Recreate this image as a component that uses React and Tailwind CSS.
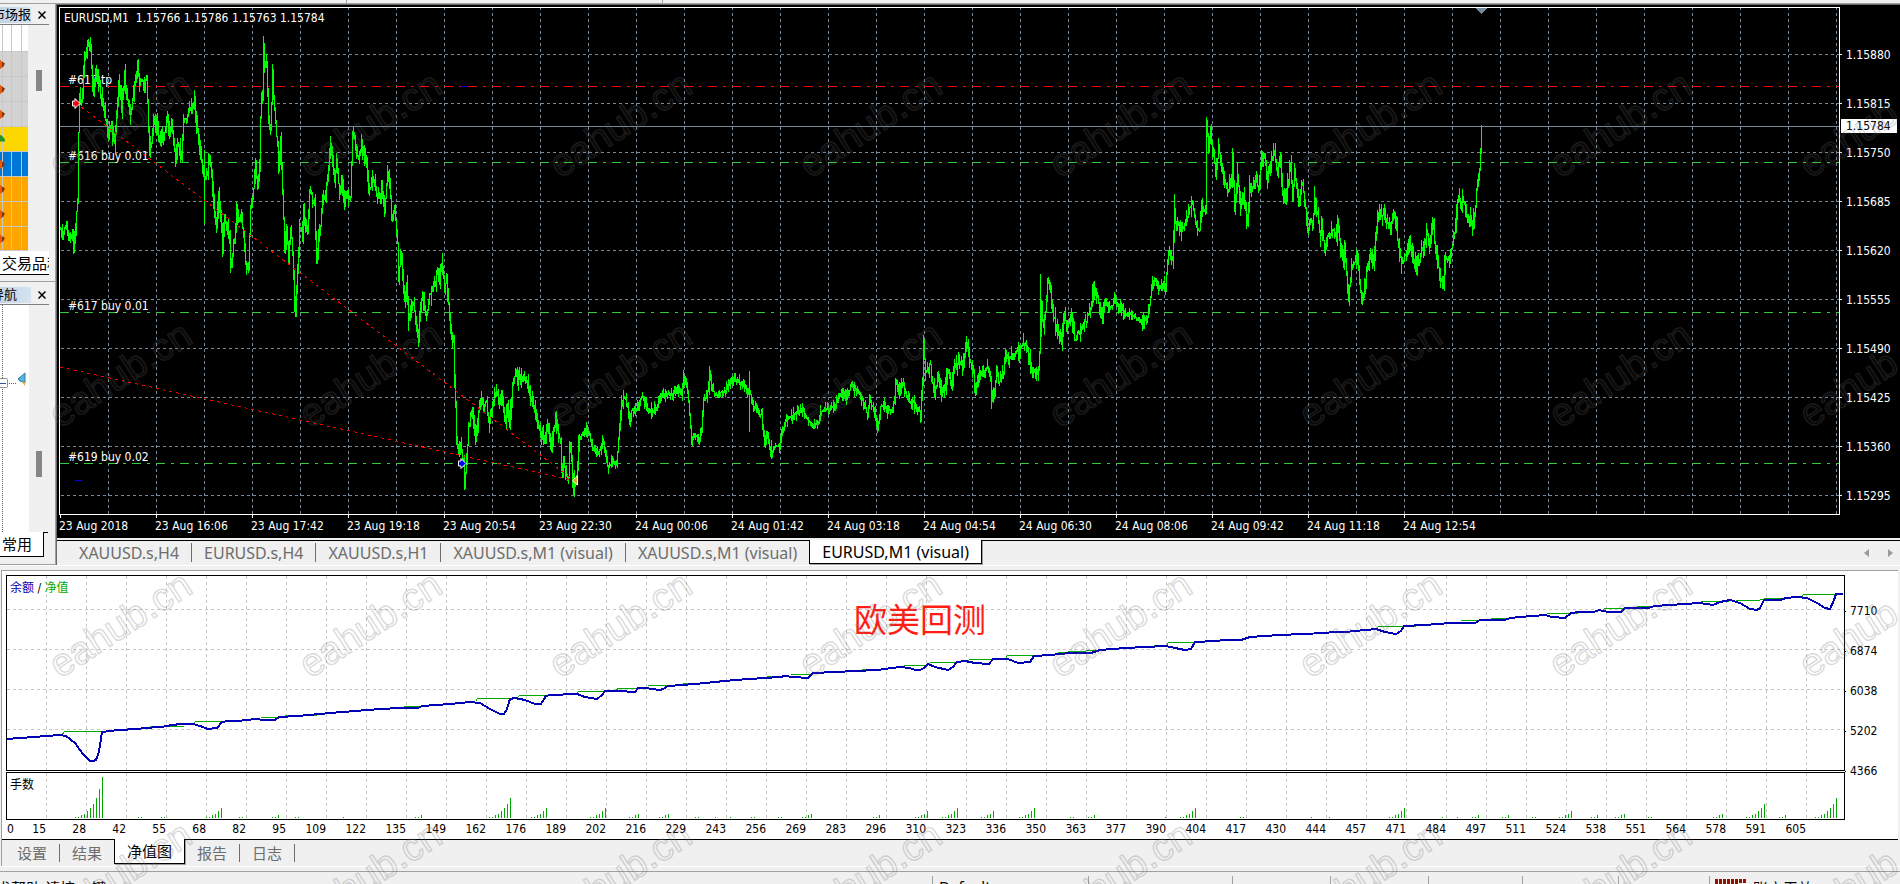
import { useState } from "react";
import { clsx } from "clsx";

const chartTabs = [
  "XAUUSD.s,H4",
  "EURUSD.s,H4",
  "XAUUSD.s,H1",
  "XAUUSD.s,M1 (visual)",
  "XAUUSD.s,M1 (visual)",
  "EURUSD,M1 (visual)",
];

const testerTabs = ["设置", "结果", "净值图", "报告", "日志"];

const prices = [
  "1.15880", "1.15815", "1.15750", "1.15685", "1.15620",
  "1.15555", "1.15490", "1.15425", "1.15360", "1.15295",
];

const times = [
  "23 Aug 2018", "23 Aug 16:06", "23 Aug 17:42", "23 Aug 19:18", "23 Aug 20:54",
  "23 Aug 22:30", "24 Aug 00:06", "24 Aug 01:42", "24 Aug 03:18", "24 Aug 04:54",
  "24 Aug 06:30", "24 Aug 08:06", "24 Aug 09:42", "24 Aug 11:18", "24 Aug 12:54",
];

const trades = [
  15, 28, 42, 55, 68, 82, 95, 109, 122, 135, 149, 162, 176, 189, 202, 216, 229,
  243, 256, 269, 283, 296, 310, 323, 336, 350, 363, 377, 390, 404, 417, 430,
  444, 457, 471, 484, 497, 511, 524, 538, 551, 564, 578, 591, 605,
];

const balances = [7710, 6874, 6038, 5202, 4366];

const orders = [
  { y: 86, label: "#617 tp", stroke: "#ff0000" },
  { y: 162, label: "#616 buy 0.01", stroke: "#32cd32" },
  { y: 312, label: "#617 buy 0.01", stroke: "#32cd32" },
  { y: 463, label: "#619 buy 0.02", stroke: "#32cd32" },
];

const quotes = [
  { bg: "bg-white", h: "h-[27px]", arrow: null },
  { bg: "bg-[#d3d3d3]", h: "h-[25px]", arrow: "down" },
  { bg: "bg-[#d3d3d3]", h: "h-[25px]", arrow: "down" },
  { bg: "bg-[#d3d3d3]", h: "h-[25px]", arrow: "down" },
  { bg: "bg-[#ffd700]", h: "h-[25px]", arrow: "up" },
  { bg: "bg-[#0078d7]", h: "h-[25px]", arrow: "down" },
  { bg: "bg-[#ffa500]", h: "h-[25px]", arrow: "down" },
  { bg: "bg-[#ffa500]", h: "h-[25px]", arrow: "down" },
  { bg: "bg-[#ffa500]", h: "h-[24px]", arrow: "down" },
];

// price path, x y pairs
const track = `59 225 62 232 65 222 68 238 71 234 73 250 75 225 76 212 77 205 78 130 79 92 80 106
82 98 83 70 85 55 87 45 90 46 91 70 93 90 95 76 98 82 100 92 103 108 106 125 108 136 110 126 112 136
114 142 117 95 118 84 120 92 121 108 123 84 124 72 126 95 130 114 132 100 135 80 137 67 139 82 142 80
144 90 146 74 147 100 149 152 151 140 153 122 155 128 156 118 158 142 160 132 162 140 165 128 167 115
169 132 171 120 173 140 175 164 177 140 179 150 181 158 183 120 186 120 188 112 191 106 194 98 196 122
199 145 202 170 205 178 207 172 209 156 211 175 213 200 216 230 218 190 220 215 222 246 224 216 227 225
229 235 230 266 232 252 234 240 236 208 238 220 241 216 243 235 245 262 248 264 250 208 252 195 255 168
257 185 259 160 260 120 262 90 263 42 264 62 266 64 268 120 270 132 272 70 273 98 275 125 277 145
278 172 280 142 282 190 284 246 286 228 288 260 290 228 292 250 293 278 294 300 295 308 296 285 299 228
302 235 303 206 305 228 307 232 309 190 312 198 314 202 316 258 318 240 320 225 322 195 324 200 327 178
330 145 332 163 334 182 336 160 339 192 341 178 344 198 347 192 350 198 352 130 355 145 358 160 361 145
363 148 366 165 369 188 372 178 375 190 378 198 381 190 384 210 387 173 389 178 391 218 394 210 397 240
398 276 400 258 401 254 403 288 404 300 406 284 408 322 411 305 413 300 415 322 417 338 418 334 419 314
422 290 424 310 426 314 428 300 431 287 434 284 436 275 438 267 439 283 441 264 443 273 444 288 446 282
447 287 449 320 451 338 453 335 454 380 456 440 459 455 460 448 463 466 464 485 466 462 468 428 470 415
472 410 475 440 477 420 479 402 482 400 484 404 486 402 488 422 490 415 492 405 495 397 497 392 499 400
501 394 503 412 505 416 507 408 509 420 511 400 512 385 515 371 517 378 521 377 525 380 528 386 531 402
535 412 539 427 541 438 544 437 547 424 551 452 553 430 555 416 558 430 560 445 561 475 563 462 566 478
568 475 569 445 571 458 573 494 574 485 576 480 578 445 581 434 584 430 588 430 590 440 593 450 596 453
600 449 602 438 605 455 607 468 611 462 616 463 618 440 621 402 624 396 627 405 629 425 631 410 635 408
638 405 641 397 645 400 648 412 652 410 656 408 661 395 670 393 675 391 678 387 681 395 683 376 686 383
688 400 691 442 694 435 698 437 701 432 703 400 707 392 709 372 711 388 715 397 720 393 725 392 728 382
730 379 735 380 740 383 745 387 749 392 752 403 757 410 761 415 764 440 767 435 771 455 774 445 779 447
782 430 787 417 795 413 803 411 808 420 813 427 818 423 820 410 828 409 835 402 842 393 846 397 850 385
855 390 862 400 867 415 869 402 873 408 877 428 880 408 883 402 886 411 891 409 894 400 895 380 898 393
901 382 903 385 906 396 910 402 914 404 918 408 920 411 922 385 923 342 925 372 928 370 930 362 931 380
934 393 938 376 941 394 945 382 947 367 951 388 954 364 958 362 962 364 966 340 969 360 973 375 975 388
980 378 987 368 990 378 992 402 994 395 996 366 998 383 1002 375 1005 357 1008 360 1012 352 1018 350
1022 343 1026 347 1029 358 1032 370 1037 372 1039 355 1041 312 1043 325 1045 312 1047 282 1048 279
1051 302 1054 320 1057 332 1061 342 1064 314 1067 325 1071 315 1074 340 1080 330 1086 320 1090 308
1092 292 1094 288 1097 298 1102 315 1105 297 1109 308 1114 299 1120 307 1125 315 1130 313 1136 317
1140 322 1146 319 1149 305 1151 288 1155 281 1160 289 1162 283 1165 290 1167 260 1169 248 1172 257
1174 220 1177 223 1180 232 1183 226 1187 218 1190 205 1192 200 1195 226 1199 228 1201 210 1205 211
1206 122 1208 148 1210 132 1213 155 1215 172 1218 150 1221 163 1224 178 1227 190 1230 184 1232 160
1234 205 1237 175 1240 208 1243 195 1247 222 1249 182 1252 190 1255 177 1258 188 1261 158 1264 152
1267 180 1271 158 1274 152 1277 174 1280 157 1282 192 1285 202 1287 182 1290 168 1292 198 1294 168
1298 205 1302 182 1305 208 1307 235 1309 218 1312 225 1314 198 1317 215 1320 236 1321 220 1324 248
1328 236 1332 228 1336 237 1337 220 1340 245 1343 262 1344 246 1347 285 1348 298 1351 268 1354 260
1357 253 1359 285 1361 297 1363 297 1366 268 1370 257 1373 260 1375 236 1379 208 1380 215 1383 212
1386 222 1390 231 1393 209 1396 230 1398 245 1401 265 1404 258 1407 252 1409 238 1412 252 1415 266
1419 260 1423 244 1426 232 1429 245 1432 222 1434 240 1437 260 1439 278 1443 278 1445 256 1449 258
1452 242 1455 226 1457 197 1460 200 1463 200 1466 218 1469 215 1472 227 1475 203 1477 178 1479 165
1480 150 1482 127`
  .split(/\s+/)
  .map(Number);

// single long wicks: x, high, low
const wicks = [
  [204, 150, 224], [263, 36, 80], [272, 64, 100], [294, 270, 312], [574, 470, 497],
  [709, 373, 395], [709, 366, 390], [749, 371, 432], [771, 440, 459], [923, 335, 380],
  [966, 336, 352], [991, 390, 409], [1040, 274, 340], [1094, 281, 300], [1174, 194, 238],
  [1206, 117, 174], [1232, 148, 188], [1273, 143, 160], [1289, 160, 186], [1432, 217, 232],
  [1246, 212, 229], [1481, 125, 140], [464, 470, 490],
];

// stable pseudo random value in 0..1
const rand = (n) => Math.abs(Math.sin(n * 12.9898) * 43758.5453) % 1;

const buildBars = () => {
  let d = "";
  let i = 0;
  const at = (x) => {
    while (i < track.length - 4 && track[i + 2] < x) i += 2;
    const [x0, y0, x1, y1] = track.slice(i, i + 4);
    return y0 + ((y1 - y0) * (x - x0)) / (x1 - x0);
  };
  let prev = at(60);
  for (let x = 60; x <= 1481; x++) {
    const calm = (x > 580 && x < 920) || (x > 1100 && x < 1150);
    const size = calm ? 7 : 11;
    const y = at(x) + (rand(x + 5000) - 0.5) * (calm ? 4 : 6);
    const top = rand(x) ** 2 * size;
    const low = rand(x + 3000) ** 2 * size;
    const a = Math.round(Math.min(prev, y) - top);
    const b = Math.round(Math.max(prev, y) + low) + 1;
    d += `M${x + 0.5} ${a}V${b}`;
    prev = y;
  }
  wicks.forEach(([x, a, b]) => {
    d += `M${x + 0.5} ${a}V${b}`;
  });
  return d;
};

const bars = buildBars();

const equity = `7,739 60,735 66,736 75,743 83,754 90,761 93,761 96,760 99,752 100,745 102,732 118,730
139,729 143,728 162,727 166,726 180,724 193,724 200,726 208,729 217,728 222,722 228,721 240,721
244,720 258,719 262,720 275,720 279,717 298,716 330,713 380,709 400,708 418,708 422,706 450,704
470,702 480,703 490,709 500,714 504,714 507,709 510,699 515,698 525,700 535,704 541,704 546,696
550,695 577,694 585,697 597,699 602,695 605,691 619,691 635,692 638,688 645,688 660,690 663,689
668,686 695,684 725,681 735,680 765,678 780,677 785,676 793,677 808,678 813,673 835,672 877,670
900,667 910,668 915,670 920,670 924,668 928,664 935,667 948,670 953,667 957,662 965,661 975,663
989,664 993,659 1008,659 1018,663 1030,662 1034,656 1050,655 1070,653 1091,653 1100,650 1125,648
1145,647 1166,646 1175,648 1185,650 1191,649 1195,642 1215,641 1225,640 1241,640 1250,637
1280,635 1325,633 1333,632 1345,632 1376,629 1385,632 1396,634 1401,631 1404,626 1425,625
1450,623 1475,623 1480,620 1505,620 1510,618 1520,617 1545,615 1552,617 1565,618 1571,613
1580,612 1594,612 1599,610 1608,612 1621,612 1625,608 1648,608 1655,606 1700,603 1713,605
1720,602 1730,600 1740,603 1750,609 1757,610 1760,608 1764,600 1780,600 1786,598 1797,597
1807,598 1817,603 1825,608 1830,609 1834,600 1836,594 1843,594`;

const balancePath =
  "M61 735 64 731H101M126 728H142M149 726H183M192 724 195 721H221M227 720H250M260 717H277M284 715H316M403 706H420M475 701 477 698H508M516 698 519 695H546M576 693 578 691H606M616 690 617 688H638M647 685H667M682 683H700M718 680H730M766 676H780M790 674H812M861 669H877M903 665H926M928 664 930 662H957M967 662 969 659H993M1005 658 1007 655H1033M1058 652 1095 650M1153 645H1166L1168 642H1195M1229 639H1242M1317 632H1326M1376 628 1378 626H1415M1460 620H1478M1490 618H1508M1546 613H1577M1583 611H1594M1602 610 1604 608H1622M1636 606H1650M1700 601H1728M1735 600H1757L1766 598H1790M1801 597 1803 594H1836";

// lot size doubles up inside a series: [first x, trades in series]
const lotHeights = [1, 1, 3, 4, 7, 10, 14, 20, 29, 41];
const lotSeries = [
  [75, 10], [138, 2], [161, 2], [206, 6], [239, 2], [272, 3], [295, 2], [343, 1],
  [415, 3], [489, 8], [531, 6], [590, 6], [629, 4], [659, 4], [695, 2], [715, 1],
  [730, 1], [751, 2], [778, 2], [802, 4], [873, 3], [915, 5], [942, 6], [981, 5],
  [1019, 6], [1070, 2], [1088, 3], [1165, 1], [1180, 6], [1240, 2], [1311, 1],
  [1329, 1], [1389, 6], [1442, 1], [1457, 1], [1472, 3], [1502, 3], [1532, 2],
  [1559, 5], [1591, 3], [1615, 4], [1648, 2], [1713, 4], [1746, 7], [1779, 3],
  [1815, 8],
];

const lots = lotSeries
  .map(([x, n]) =>
    lotHeights
      .slice(0, n)
      .map((h, i) => `M${x + i * 3 + 0.5} 818v${-h}`)
      .join(""),
  )
  .join("");

const range = (n) => Array.from({ length: n }, (_, i) => i);

const CloseButton = ({ label }) => (
  <button aria-label={label} className="mr-[5px] flex h-4 w-4 items-center justify-center">
    <svg width="8" height="8" viewBox="0 0 8 8" stroke="#000" strokeWidth="1.5">
      <path d="M0.5 0.5 7.5 7.5M7.5 0.5 0.5 7.5" />
    </svg>
  </button>
);

const PanelTitle = ({ text, className }) => (
  <div className="flex h-[18px] items-center justify-between">
    <h2
      className={clsx(
        "flex h-4 w-[31px] items-center justify-end overflow-hidden bg-linear-to-r from-[#c3d3e4] to-[#d6e3f1] text-[13px] whitespace-nowrap",
        className,
      )}
    >
      {text}
    </h2>
    <CloseButton label={`关闭${text}`} />
  </div>
);

const MarketWatch = () => (
  <section className="flex h-[276px] flex-col border-b border-[#a0a0a0]">
    <PanelTitle text="市场报" />
    <div className="mr-1.5 flex border-t border-[#808080]">
      <div className="w-7 shrink-0">
        {quotes.map((q, i) => (
          <div key={i} className={clsx("flex items-center border-b border-[#c8c8c8]", q.bg, q.h)}>
            <svg width="28" height="100%" viewBox="0 0 28 25" preserveAspectRatio="none">
              <path d="M2.5 0V25M11.5 0V25M21.5 0V25" stroke="#c8c8c8" />
              {q.arrow === "down" && (
                <>
                  <path d="M0 8 2 10V16L0 18Z" fill="#e8590c" />
                  <path d="M2 10 5 12 3 16H2Z" fill="#8a3208" />
                </>
              )}
              {q.arrow === "up" && <path d="M0 8 2 9 5 13V15H0Z" fill="#22962b" />}
            </svg>
          </div>
        ))}
      </div>
      <div className="flex-1 pt-[45px]">
        <div className="ml-2 h-[21px] w-1.5 bg-[#858585]" />
      </div>
    </div>
    <button className="h-[24px] w-[49px] shrink-0 overflow-hidden border-b border-black bg-white pl-0.5 text-left text-[15px] leading-6 whitespace-nowrap">
      交易品种
    </button>
  </section>
);

const Navigator = () => (
  <section className="mt-1 flex flex-1 flex-col border-b border-[#a0a0a0]">
    <PanelTitle text="导航" className="pr-3.5" />
    <div className="mr-1.5 flex h-[228px] border-t border-[#808080]">
      <div className="w-[29px] bg-white">
        <svg width="29" height="227" viewBox="0 0 29 227">
          <path d="M2.5 0V74M2.5 84V227" stroke="#606060" strokeDasharray="1 1" />
          <path d="M9 78.500H17" stroke="#606060" strokeDasharray="1 1" />
          <rect x="-2.5" y="73.5" width="10" height="9" rx="1" fill="#fff" stroke="#909090" />
          <path d="M0 78.500H6" stroke="#3b4fa0" />
          <path d="M18 74 25 68V78L20 76Z" fill="#58b4dc" stroke="#2c7fa8" />
          <path d="M22 77H25V81Z" fill="#e0a820" />
        </svg>
      </div>
      <div className="flex-1 pt-[146px]">
        <div className="ml-[7px] h-[26px] w-1.5 bg-[#858585]" />
      </div>
    </div>
    <div className="flex">
      <button className="h-[25px] w-11 border-r border-b border-black bg-white pl-0.5 text-left text-[15px] leading-6">
        常用
      </button>
      <div className="mr-[7px] flex-1 border-t border-black" />
    </div>
  </section>
);

const PriceChart = () => (
  <div className="flex h-[533px] bg-black pt-0.5 pl-0.5 font-['DejaVu_Sans_Condensed','Noto_Sans',sans-serif] text-xs text-white">
    <div className="min-w-0 flex-1">
      <div className="h-[508px] overflow-hidden border border-white">
        <svg width="1779" height="506" shapeRendering="crispEdges">
          <g transform="translate(-60 -8)" fill="none">
            <g stroke="#778899" strokeDasharray="3 3">
              {range(37).map((i) => (
                <path key={i} d={`M${108.5 + i * 48} 7V514`} />
              ))}
              {range(10).map((i) => (
                <path key={i} d={`M61 ${54.5 + i * 49}H1839`} />
              ))}
            </g>
            <path d="M60 126.5H1839" stroke="#778899" />
            {orders.map((o) => (
              <path
                key={o.y}
                d={`M60 ${o.y + 0.5}H1839`}
                stroke={o.stroke}
                strokeDasharray="9 6 3 6"
              />
            ))}
            <g className="text-xs" fill="#fff">
              <text x="64" y="22">
                {"EURUSD,M1\u00a0\u00a01.15766 1.15786 1.15763 1.15784"}
              </text>
              {orders.map((o) => (
                <text key={o.y} x="68" y={o.y - 2}>
                  {o.label}
                </text>
              ))}
            </g>
            <path d={bars} stroke="#00ff00" />
            <g stroke="#ff0000" strokeDasharray="3 4">
              <path d="M76 103 572 479" />
              <path d="M60 367 572 480" />
            </g>
            <path d="M75 480.5H82M461 86.5H468" stroke="#0000ff" />
            <path d="M1476 8H1487L1481.5 14Z" fill="#778899" />
            <g stroke="#fff" shapeRendering="auto">
              <path d="M72.500 101H75V98.500L80 103.500 75 108.500V106H72.500Z" fill="#ff0000" />
              <path d="M458.500 461H461V458.500L466 463.500 461 468.500V466H458.500Z" fill="#0000ff" />
              <path d="M572.500 480.500 577.500 476V485Z" fill="#daa520" />
            </g>
          </g>
        </svg>
      </div>
      <div className="flex">
        {times.map((t) => (
          <div key={t} className="w-24 shrink-0 whitespace-nowrap">
            <div className="ml-px h-[3px] w-px bg-white" />
            <div className="leading-[17px]">{t}</div>
          </div>
        ))}
      </div>
    </div>
    <div className="relative w-[60px] pt-[23px]">
      {prices.map((p) => (
        <div key={p} className="flex h-[49px] items-center">
          <span className="mr-1 h-px w-0.5 bg-white" />
          {p}
        </div>
      ))}
      <div className="absolute top-28 left-px h-3.5 w-14 bg-white pl-[5px] leading-[14px] text-black">
        1.15784
      </div>
    </div>
  </div>
);

const ChartTabs = () => {
  const [active, setActive] = useState(5);

  return (
    <div className="mt-0.5 flex h-6 items-stretch border-t border-black pl-2.5 text-[#6d6d6d]">
      {chartTabs.map((t, i) => (
        <button
          key={i}
          onClick={() => setActive(i)}
          className={clsx(
            "flex items-center px-3 text-base whitespace-nowrap",
            active === i
              ? "-mt-px border border-t-0 border-black bg-white pt-px text-black shadow-[1px_1px_0_#a0a0a0]"
              : "my-0.5",
            active !== i && active !== i + 1 && "border-r border-[#6d6d6d]",
          )}
        >
          {t}
        </button>
      ))}
      <div className="ml-auto flex items-center gap-[18px] pr-1.5">
        <button aria-label="向左">
          <svg width="6" height="8" viewBox="0 0 6 8">
            <path d="M5 0V8L0 4Z" fill="#9a9a9a" />
          </svg>
        </button>
        <button aria-label="向右">
          <svg width="6" height="8" viewBox="0 0 6 8">
            <path d="M0 0V8L5 4Z" fill="#9a9a9a" />
          </svg>
        </button>
      </div>
    </div>
  );
};

const EquityChart = () => (
  <div className="flex h-[268px] bg-white pt-1 pl-1 font-['DejaVu_Sans_Condensed','Noto_Sans_CJK_SC',sans-serif] text-xs text-black">
    <div className="w-[1839px] shrink-0">
      <div className="h-[196px] overflow-hidden border border-black">
        <svg width="1837" height="194">
          <g transform="translate(-7 -576)" fill="none">
            <g stroke="#c8c8c8" strokeDasharray="3 3" shapeRendering="crispEdges">
              {range(45).map((i) => (
                <path key={i} d={`M${46.5 + i * 40} 576V770`} />
              ))}
              {range(4).map((i) => (
                <path key={i} d={`M7 ${609.5 + i * 40}H1844`} />
              ))}
            </g>
            <path
              d={balancePath}
              stroke="#00aa00"
              transform="translate(0.5 0.5)"
              shapeRendering="crispEdges"
            />
            <polyline
              points={equity}
              stroke="#0000b4"
              strokeWidth="2"
              shapeRendering="crispEdges"
            />
            <text x="10" y="592" className="text-xs" fill="#0000b4">
              余额
              <tspan fill="#000">{"\u00a0/\u00a0"}</tspan>
              <tspan fill="#00aa00">净值</tspan>
            </text>
            <text x="854" y="632" className="text-[33px]" fill="#ff1e14">
              欧美回测
            </text>
          </g>
        </svg>
      </div>
      <div className="mt-px h-12 overflow-hidden border border-black">
        <svg width="1837" height="46">
          <g transform="translate(-7 -773)" fill="none" shapeRendering="crispEdges">
            <g stroke="#c8c8c8" strokeDasharray="3 3">
              {range(45).map((i) => (
                <path key={i} d={`M${46.5 + i * 40} 773V819`} />
              ))}
            </g>
            <path d={lots} stroke="#00aa00" />
            <text x="10" y="789" className="text-xs" fill="#000">
              手数
            </text>
          </g>
        </svg>
      </div>
      <div className="flex leading-[19px]">
        <span className="w-10 shrink-0 pl-px">
          0<span className="float-right">{trades[0]}</span>
        </span>
        {trades.slice(1).map((n) => (
          <span key={n} className="w-10 shrink-0 text-right">
            {n}
          </span>
        ))}
      </div>
    </div>
    <div className="pt-4">
      {balances.map((b) => (
        <div key={b} className="flex h-10 items-center">
          <span className="mr-1 h-px w-px bg-black" />
          {b}
        </div>
      ))}
    </div>
  </div>
);

const Tester = () => {
  const [active, setActive] = useState(2);

  return (
    <section className="mr-0.5 ml-px border-t border-l border-[#a0a0a0]">
      <EquityChart />
      <div className="flex h-[27px] items-stretch border-t border-black text-[#6d6d6d]">
        {testerTabs.map((t, i) => (
          <button
            key={t}
            onClick={() => setActive(i)}
            className={clsx(
              "flex items-center text-[15px] leading-5",
              active === i
                ? "-mt-px mb-0.5 border border-t-0 border-black bg-white px-3 text-black shadow-[1px_1px_0_#a0a0a0]"
                : "my-1 px-3",
              i === 0 && "ml-[3px]",
              active !== i && active !== i + 1 && "border-r border-[#6d6d6d]",
            )}
          >
            {t}
          </button>
        ))}
      </div>
    </section>
  );
};

const StatusBar = () => (
  <footer className="mt-1 flex h-[13px] shrink-0 overflow-hidden border-t border-[#a0a0a0] pt-1 text-[15px] leading-6 whitespace-nowrap text-black">
    <div className="w-[932px] shrink-0">
      <p className="-ml-[19px]">寻求帮助,请按F1键</p>
    </div>
    <div className="w-39 shrink-0 border-l border-[#a0a0a0] pl-1.5 leading-5">Default</div>
    <div className="w-36 shrink-0 border-l border-[#a0a0a0]" />
    <div className="w-[98px] shrink-0 border-l border-[#a0a0a0]" />
    <div className="w-[98px] shrink-0 border-l border-[#a0a0a0]" />
    <div className="w-[94px] shrink-0 border-l border-[#a0a0a0]" />
    <div className="w-24 shrink-0 border-l border-[#a0a0a0]" />
    <div className="w-[91px] shrink-0 border-l border-[#a0a0a0]" />
    <div className="flex flex-1 items-start border-l border-[#a0a0a0] pl-[5px]">
      <svg width="32" height="14" viewBox="0 0 32 14" fill="#8f1400" className="mt-[3px] shrink-0">
        {range(8).map((i) => (
          <rect key={i} x={i * 4} y="0" width="3" height={i > 5 ? 4 : 14} />
        ))}
      </svg>
      <span className="pl-1.5">账户无效</span>
    </div>
  </footer>
);

const Watermark = () => (
  <svg
    aria-hidden="true"
    className="pointer-events-none absolute inset-0 h-full w-full text-[39px]"
    fontFamily="Liberation Sans, Arial, sans-serif"
    fill="#ffffff"
    fillOpacity="0.05"
    stroke="#606060"
    strokeOpacity="0.24"
    strokeWidth="1.5"
  >
    {range(4).map((r) =>
      range(8).map((c) => (
        <text key={`${r}-${c}`} transform={`translate(${60 + c * 250} ${179 + r * 250}) rotate(-33)`}>
          eahub.cn
        </text>
      )),
    )}
  </svg>
);

const App = () => (
  <div className="relative flex h-screen flex-col overflow-hidden bg-[#f0f0f0] font-['Noto_Sans','Noto_Sans_CJK_SC',sans-serif] text-black">
    <div className="flex h-1 shrink-0 border-b border-[#a0a0a0]">
      <div className="w-[347px] border-r border-[#a0a0a0]" />
      <div className="w-[316px] border-r border-[#a0a0a0]" />
    </div>
    <div className="flex h-[561px] shrink-0">
      <aside className="flex w-14 shrink-0 flex-col border-r border-[#a0a0a0] pt-0.5">
        <MarketWatch />
        <Navigator />
      </aside>
      <main className="flex min-w-0 flex-1 flex-col border-t border-l border-[#696969]">
        <PriceChart />
        <ChartTabs />
      </main>
    </div>
    <div className="mb-1 h-px shrink-0 bg-white" />
    <Tester />
    <div className="h-px shrink-0 bg-white" />
    <StatusBar />
    <Watermark />
  </div>
);

export default App;
